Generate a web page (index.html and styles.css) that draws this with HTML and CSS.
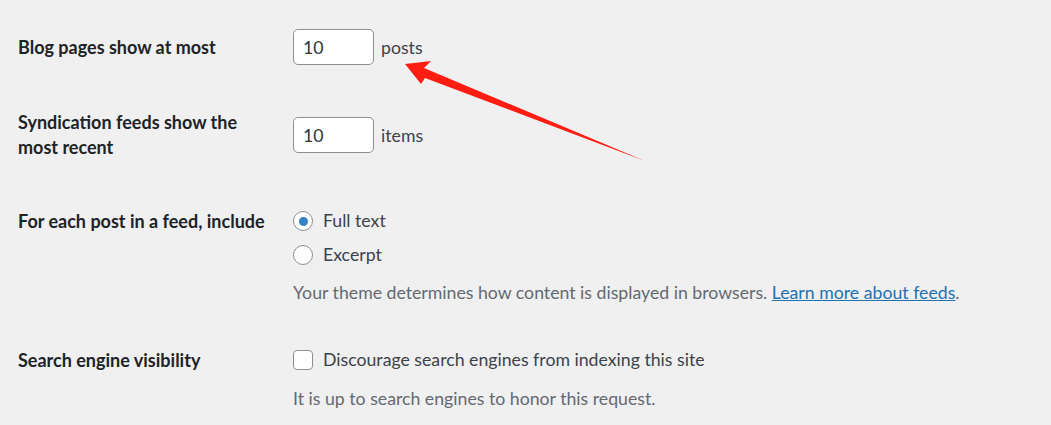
FILE: index.html
```html
<!DOCTYPE html>
<html lang="en">
<head>
<meta charset="utf-8">
<title>Reading Settings</title>
<link rel="stylesheet" href="styles.css">
</head>
<body>
<div class="page">
  <div class="form-table">
    <div class="row row-center row-first">
      <div class="th">Blog pages show at most</div>
      <div class="td">
        <input class="num" type="text" value="10">
        <span class="unit">posts</span>
      </div>
    </div>
    <div class="row row-center row-second">
      <div class="th">Syndication feeds show the<br>most recent</div>
      <div class="td">
        <input class="num" type="text" value="10">
        <span class="unit">items</span>
      </div>
    </div>
    <div class="row row-third">
      <div class="th line">For each post in a feed, include</div>
      <div class="td">
        <label class="line opt"><input type="radio" name="feed" class="radio" checked> Full text</label>
        <label class="line opt"><input type="radio" name="feed" class="radio"> Excerpt</label>
        <p class="desc">Your theme determines how content is displayed in browsers. <a href="#" class="link">Learn more about feeds</a>.</p>
      </div>
    </div>
    <div class="row row-fourth">
      <div class="th line">Search engine visibility</div>
      <div class="td">
        <label class="line opt"><input type="checkbox" class="check"> Discourage search engines from indexing this site</label>
        <p class="desc desc-last">It is up to search engines to honor this request.</p>
      </div>
    </div>
  </div>
  <svg class="arrow" width="1051" height="425" viewBox="0 0 1051 425" aria-hidden="true">
    <polygon points="405,64 431,61 424,68 645,161 425,78 421,84" fill="#ff1d12"/>
  </svg>
</div>
</body>
</html>
```
FILE: styles.css
```css
html, body {
  margin: 0;
  padding: 0;
  background: #f0f0f1;
}
body {
  font-family: "Lato", "Open Sans", sans-serif;
  font-size: 18px;
  color: #3c434a;
}
.page {
  position: relative;
  width: 1051px;
  height: 425px;
  overflow: hidden;
  padding-left: 18px;
  box-sizing: border-box;
}
.form-table {
  display: flex;
  flex-direction: column;
}
.row {
  display: grid;
  grid-template-columns: 275px 1fr;
  align-items: start;
}
.row-center {
  align-items: center;
}
.row-first { margin-top: 29px; }
.row-second { margin-top: 45px; }
.row-third { margin-top: 44px; }
.row-fourth { margin-top: 38px; }
.th {
  color: #1d2327;
  font-weight: 700;
  line-height: 25px;
}
.td {
  display: flex;
  flex-direction: column;
  align-items: flex-start;
  font-size: 17.7px;
}
.row-center .td {
  flex-direction: row;
  align-items: center;
}
.line {
  line-height: 34px;
  height: 34px;
}
.num {
  box-sizing: border-box;
  width: 81px;
  height: 36px;
  margin: 0;
  padding: 0 0 0 9px;
  border: 1px solid #8c8f94;
  border-radius: 5px;
  background: #fff;
  font: inherit;
  color: #2c3338;
  outline: none;
}
.unit {
  margin-left: 7px;
  line-height: 25px;
}
.opt {
  display: flex;
  align-items: center;
  gap: 10px;
  color: #3c434a;
}
.radio, .check {
  appearance: none;
  -webkit-appearance: none;
  box-sizing: border-box;
  width: 20px;
  height: 20px;
  margin: 0;
  border: 1px solid #8c8f94;
  background: #fff;
  display: grid;
  place-items: center;
}
.radio {
  border-radius: 50%;
}
.radio:checked::before {
  content: "";
  width: 9px;
  height: 9px;
  border-radius: 50%;
  background: #3582c4;
}
.check {
  border-radius: 4px;
}
.desc {
  margin: 8px 0 0;
  line-height: 25px;
  color: #646970;
}
.desc-last {
  margin-top: 9px;
}
.link {
  color: #2271b1;
  text-decoration: underline;
}
.arrow {
  position: absolute;
  left: 0;
  top: 0;
  pointer-events: none;
}
```
